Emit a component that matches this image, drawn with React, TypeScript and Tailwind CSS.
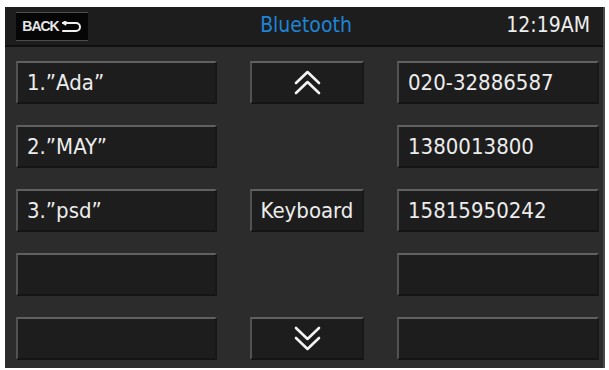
const font = { fontFamily: '"DejaVu Sans Condensed", "DejaVu Sans", sans-serif' };

const Chevrons = ({ up }: { up: boolean }) => (
  <svg width="27" height="25" viewBox="0 0 27 25" fill="none" stroke="#f2f2f2" strokeWidth="2.6" strokeLinecap="round" strokeLinejoin="round" className={up ? "" : "rotate-180"}>
    <polyline points="2,13 13.5,2 25,13" />
    <polyline points="2,23 13.5,12 25,23" />
  </svg>
);

const Cell = ({ children, center }: { children?: React.ReactNode; center?: boolean }) => (
  <div
    className={`h-[43px] flex items-center bg-[#1d1d1d] border-t-2 border-l-2 border-t-[#606060] border-l-[#525252] border-b-2 border-r-2 border-b-[#141414] border-r-[#181818] text-[22px] text-[#ececec] ${center ? "justify-center" : "pl-[9px]"}`}
    style={font}
  >
    {children}
  </div>
);

const Empty = () => <div className="h-[43px]" />;

export default function App() {
  return (
    <div className="w-[609px] h-[370px] bg-white pt-[7px] pl-[5px]">
      <div className="w-[600px] h-[361px] bg-[#2c2c2c] flex flex-col border-r-2 border-r-[#4a4a4a]">
        {/* header */}
        <div className="h-[40px] bg-[#1d1d1d] border-b-2 border-b-[#101010] grid grid-cols-[1fr_auto_1fr] items-center px-[11px]">
          <div>
            <div className="w-[72px] h-[29px] bg-[#060606] border-t border-b border-[#4c4c4c] flex items-center justify-center gap-[2px]">
              <span className="text-[14px] font-bold text-[#e6e6e6] tracking-[-1px]" style={{ fontFamily: '"Liberation Sans", Arial, sans-serif' }}>
                BACK
              </span>
              <svg width="21" height="11" viewBox="0 0 21 11" fill="none" stroke="#f0f0f0" strokeWidth="2" strokeLinecap="round" strokeLinejoin="round">
                <path d="M2 2 H15 a4 4 0 0 1 0 8 H2" />
                <path d="M4.5 0.5 L2 2 L4.5 3.5" />
              </svg>
            </div>
          </div>
          <span className="text-[21px] text-[#1e84d6] ml-[4px]" style={font}>
            Bluetooth
          </span>
          <span className="justify-self-end text-[21px] text-[#eeeeee] pr-[2px]" style={font}>
            12:19AM
          </span>
        </div>

        {/* body */}
        <div className="grid grid-cols-[201px_114px_202px] gap-x-[33px] gap-y-[21px] pt-[14px] pl-[11px]">
          <Cell>1.”Ada”</Cell>
          <Cell center>
            <Chevrons up />
          </Cell>
          <Cell>020-32886587</Cell>

          <Cell>2.”MAY”</Cell>
          <Empty />
          <Cell>1380013800</Cell>

          <Cell>3.”psd”</Cell>
          <Cell center>Keyboard</Cell>
          <Cell>15815950242</Cell>

          <Cell />
          <Empty />
          <Cell />

          <Cell />
          <Cell center>
            <Chevrons up={false} />
          </Cell>
          <Cell />
        </div>
      </div>
    </div>
  );
}
